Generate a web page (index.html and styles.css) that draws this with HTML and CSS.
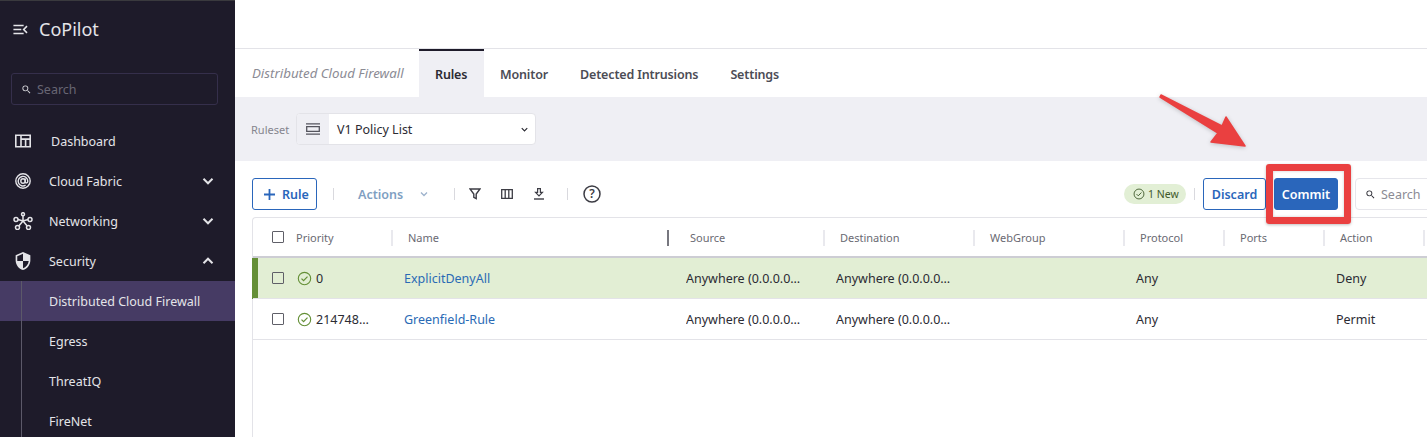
FILE: index.html
```html
<!DOCTYPE html>
<html lang="en">
<head>
  <meta charset="UTF-8" />
  <title>CoPilot</title>
  <link rel="stylesheet" href="styles.css">
</head>
<body>

<svg class="defs" width="0" height="0">
  <symbol id="chev" viewBox="0 0 24 24"><path d="M6 9l6 6 6-6" fill="none" stroke="currentColor" stroke-width="2.6"/></symbol>
  <symbol id="mag" viewBox="0 0 24 24"><path fill="currentColor" d="M15.5 14h-.79l-.28-.27A6.471 6.471 0 0 0 16 9.5 6.5 6.5 0 1 0 9.5 16c1.61 0 3.09-.59 4.23-1.57l.27.28v.79l5 4.99L20.49 19l-4.99-5zm-6 0C7.01 14 5 11.99 5 9.5S7.01 5 9.5 5 14 7.01 14 9.5 11.99 14 9.5 14z"/></symbol>
  <symbol id="ok" viewBox="0 0 16 16"><circle cx="8" cy="8" r="6.6" fill="none" stroke="currentColor" stroke-width="1.2"/><path d="M4.8 8.2l2.2 2.2 4.2-4.4" fill="none" stroke="currentColor" stroke-width="1.3"/></symbol>
</svg>

<div class="app">
  <!-- Sidebar -->
  <aside class="sidebar">
    <div class="brand">
      <svg class="brand-icon" viewBox="3 5 18 14"><path fill="currentColor" d="M3 18h13v-2H3v2zm0-5h10v-2H3v2zm0-7v2h13V6H3zm18 9.59L17.42 12 21 8.41 19.59 7l-5 5 5 5L21 15.59z"/></svg>
      <span>CoPilot</span>
    </div>
    <div class="side-search">
      <svg class="icon-10"><use href="#mag"/></svg>
      <span>Search</span>
    </div>
    <nav class="nav">
      <a class="nav-item nav-dash">
        <svg class="nav-icon" viewBox="0 0 16 13"><path fill="none" stroke="currentColor" stroke-width="1.6" d="M.8.8h14.4v11.4H.8zM6 .8v11.4M6 4.6h9.2M10.6 4.6v7.6"/></svg>
        <span>Dashboard</span>
      </a>
      <a class="nav-item">
        <svg class="nav-icon" viewBox="0 0 16 16"><g fill="none" stroke="currentColor" stroke-width="1.4"><circle cx="8" cy="8" r="7.2"/><circle cx="8" cy="8" r="2.2"/><path d="M10.2 5.4v3.4c0 1.6 2.6 1.6 2.6-.6A4.8 4.8 0 1 0 10.6 12.2"/></g></svg>
        <span>Cloud Fabric</span>
        <svg class="nav-chev"><use href="#chev"/></svg>
      </a>
      <a class="nav-item">
        <svg class="nav-icon nav-icon-wide" viewBox="0 0 20 18"><g fill="none" stroke="currentColor" stroke-width="1.5"><circle cx="10" cy="2.2" r="1.5"/><circle cx="3" cy="7.5" r="2"/><circle cx="17" cy="7.5" r="2"/><circle cx="4.5" cy="15.5" r="2"/><circle cx="15.5" cy="15.5" r="2"/><path d="M10 3.7v5M5 7.5l5 1.5 5-1.5M5.8 14l4.2-5 4.2 5"/></g></svg>
        <span>Networking</span>
        <svg class="nav-chev"><use href="#chev"/></svg>
      </a>
      <a class="nav-item">
        <svg class="nav-icon nav-icon-tall" viewBox="3 1 18 22"><path fill="currentColor" d="M12 1L3 5v6c0 5.55 3.84 10.74 9 12 5.16-1.26 9-6.45 9-12V5l-9-4zm0 10.99h7c-.53 4.12-3.28 7.79-7 8.94V12H5V6.3l7-3.11v8.8z"/></svg>
        <span>Security</span>
        <svg class="nav-chev nav-chev-up"><use href="#chev"/></svg>
      </a>
      <div class="subnav">
        <a class="nav-item selected"><span>Distributed Cloud Firewall</span></a>
        <a class="nav-item"><span>Egress</span></a>
        <a class="nav-item"><span>ThreatIQ</span></a>
        <a class="nav-item"><span>FireNet</span></a>
      </div>
    </nav>
  </aside>

  <!-- Main -->
  <main class="main">
    <div class="topbar"></div>

    <div class="tabs">
      <span class="page-title">Distributed Cloud Firewall</span>
      <a class="tab active">Rules</a>
      <a class="tab">Monitor</a>
      <a class="tab">Detected Intrusions</a>
      <a class="tab">Settings</a>
    </div>

    <div class="ruleset-bar">
      <span class="ruleset-label">Ruleset</span>
      <div class="ruleset-select">
        <span class="ruleset-addon">
          <svg width="14" height="12" viewBox="0 0 14 12"><path fill="none" stroke="#55555e" stroke-width="1.3" d="M.7 3.6h12.6v4.8H.7z"/><path stroke="#55555e" stroke-width="1.4" d="M0 .9h14M0 11.1h14"/></svg>
        </span>
        <span class="ruleset-value">V1 Policy List</span>
        <svg class="ruleset-chev"><use href="#chev"/></svg>
      </div>
    </div>

    <div class="content">
      <div class="toolbar">
        <button class="btn btn-outline btn-rule"><svg class="plus" viewBox="0 0 11 11"><path d="M5.5 0v11M0 5.500h11" stroke="currentColor" stroke-width="1.8"/></svg>Rule</button>
        <span class="tool-sep sep-a"></span>
        <span class="actions">Actions<svg class="actions-chev"><use href="#chev"/></svg></span>
        <span class="tool-sep sep-b"></span>
        <svg class="tool-icon" viewBox="0 0 12 12"><path fill="none" stroke="#3c3c44" stroke-width="1.4" d="M1 1h10L7.200 6v4.600l-2.400-1.200V6z"/></svg>
        <svg class="tool-icon" viewBox="0 0 12 10"><path fill="none" stroke="#3c3c44" stroke-width="1.3" d="M.7.7h10.600v8.600H.7zM4.200.7v8.600M7.800.7v8.600"/></svg>
        <svg class="tool-icon" viewBox="0 0 12 12"><path fill="none" stroke="#3c3c44" stroke-width="1.2" d="M4.600.6h2.800v3.800h2L6 7.800 2.600 4.400h2z"/><path stroke="#3c3c44" stroke-width="1.4" d="M1 11h10"/></svg>
        <span class="tool-sep sep-c"></span>
        <svg class="help-icon" viewBox="0 0 18 18"><circle cx="9" cy="9" r="8" fill="none" stroke="#3c3c44" stroke-width="1.5"/><text x="9" y="13" text-anchor="middle" class="help-q">?</text></svg>

        <div class="toolbar-right">
          <span class="badge-new"><svg class="icon-12"><use href="#ok"/></svg>1 New</span>
          <span class="tool-sep sep-d"></span>
          <button class="btn btn-outline btn-discard">Discard</button>
          <button class="btn btn-primary">Commit</button>
          <div class="table-search">
            <svg class="icon-10"><use href="#mag"/></svg>
            <span>Search</span>
          </div>
        </div>
      </div>

      <div class="table">
        <div class="row head">
          <div class="cell cell-first"><span class="check"></span><span>Priority</span></div>
          <div class="cell">Name<span class="col-handle"></span></div>
          <div class="cell">Source</div>
          <div class="cell">Destination</div>
          <div class="cell">WebGroup</div>
          <div class="cell">Protocol</div>
          <div class="cell">Ports</div>
          <div class="cell">Action</div>
          <div class="cell"></div>
        </div>
        <div class="row body-row is-new">
          <div class="cell cell-first"><span class="check"></span><svg class="row-ok"><use href="#ok"/></svg><span class="prio">0</span></div>
          <div class="cell"><a class="rule-link">ExplicitDenyAll</a></div>
          <div class="cell"><span class="clip">Anywhere (0.0.0.0/0)</span></div>
          <div class="cell"><span class="clip">Anywhere (0.0.0.0/0)</span></div>
          <div class="cell"></div>
          <div class="cell">Any</div>
          <div class="cell"></div>
          <div class="cell">Deny</div>
          <div class="cell"></div>
        </div>
        <div class="row body-row">
          <div class="cell cell-first"><span class="check"></span><svg class="row-ok"><use href="#ok"/></svg><span class="prio clip">2147483647</span></div>
          <div class="cell"><a class="rule-link">Greenfield-Rule</a></div>
          <div class="cell"><span class="clip">Anywhere (0.0.0.0/0)</span></div>
          <div class="cell"><span class="clip">Anywhere (0.0.0.0/0)</span></div>
          <div class="cell"></div>
          <div class="cell">Any</div>
          <div class="cell"></div>
          <div class="cell">Permit</div>
          <div class="cell"></div>
        </div>
      </div>
    </div>
  </main>
</div>

<!-- Annotation drawn on top of the screenshot -->
<svg class="note-arrow" width="100" height="66" viewBox="0 0 100 66"><path fill="#ea4040" stroke="#ea4040" stroke-width="1.5" stroke-linejoin="round" d="M3 5L4 3 65 34 69 25 88 54 54 50 61 41z"/></svg>
<div class="note-box"></div>

</body>
</html>
```

FILE: styles.css
```css
* {
  box-sizing: border-box;
}
html, body {
  height: 100%;
}
body {
  margin: 0;
  overflow: hidden;
  background-color: white;
  color: #2b2b33;
  font-family: "Noto Sans", "Liberation Sans", sans-serif;
  font-size: 12.5px;
}
.defs {
  display: none;
}
.app {
  display: flex;
  height: 437px;
  overflow: hidden;
}

/* sidebar */
.sidebar {
  flex: 0 0 235px;
  background-color: #1e1b2a;
  border-top: 1px solid #3a3a3e;
  color: #e4e4e8;
}
.brand {
  display: flex;
  align-items: center;
  height: 56px;
  padding-left: 13px;
  font-size: 18px;
  gap: 11px;
}
.brand-icon {
  width: 15px;
  height: 11px;
}
.side-search {
  display: flex;
  align-items: center;
  gap: 5px;
  height: 32px;
  margin: 16px 17px 0 11px;
  padding-left: 9px;
  border: 1px solid #352f4b;
  border-radius: 3px;
  color: #686674;
}
.side-search .icon-10 {
  color: #d8d8dc;
}
.icon-10 {
  width: 11px;
  height: 11px;
  flex: none;
}
.icon-12 {
  width: 12px;
  height: 12px;
  flex: none;
}
.nav {
  margin-top: 16px;
}
.nav-item {
  display: flex;
  align-items: center;
  height: 40px;
  padding-left: 49px;
  position: relative;
}
.nav-dash {
  padding-left: 51px;
}
.nav-icon {
  position: absolute;
  left: 15px;
  top: 12px;
  width: 16px;
  height: 16px;
}
.nav-icon-wide {
  left: 13px;
  width: 20px;
  height: 18px;
  top: 11px;
}
.nav-icon-tall {
  top: 11px;
  height: 18px;
}
.nav-chev {
  position: absolute;
  right: 18px;
  top: 11px;
  width: 18px;
  height: 18px;
}
.nav-chev-up {
  transform: rotate(180deg);
}
.subnav {
  position: relative;
  padding-bottom: 40px;
}
.subnav::before {
  content: "";
  position: absolute;
  left: 21px;
  top: 0;
  bottom: 0;
  width: 1px;
  background-color: #5c5969;
  z-index: 1;
}
.selected {
  background-color: #463b64;
}

/* main column */
.main {
  flex: 1;
  min-width: 0;
  overflow: hidden;
}
.topbar {
  height: 49px;
  border-bottom: 1px solid #e3e3e8;
}
.tabs {
  display: flex;
  align-items: center;
  height: 48px;
  padding-left: 17px;
}
.page-title {
  width: 167px;
  color: #8b8b94;
  font-style: italic;
  font-size: 13.3px;
}
.tab {
  display: flex;
  align-items: center;
  height: 48px;
  padding: 0 16px;
  font-weight: 600;
  letter-spacing: -0.15px;
  color: #4c4c55;
  border-top: 2px solid transparent;
}
.tab.active {
  width: 65px;
  color: #2b2b33;
  background-color: #efeff4;
  border-top-color: #1e1b2a;
}
.ruleset-bar {
  display: flex;
  align-items: center;
  height: 64px;
  padding-left: 16px;
  background-color: #efeff4;
}
.ruleset-label {
  width: 45px;
  font-size: 11px;
  color: #85858e;
}
.ruleset-select {
  display: flex;
  align-items: center;
  width: 240px;
  height: 32px;
  background-color: white;
  border: 1px solid #e3e3e8;
  border-radius: 4px;
  position: relative;
  overflow: hidden;
}
.ruleset-addon {
  display: flex;
  align-items: center;
  justify-content: center;
  width: 32px;
  height: 100%;
  background-color: #efeff4;
}
.ruleset-value {
  padding-left: 8px;
  color: #2b2b33;
}
.ruleset-chev {
  position: absolute;
  right: 5px;
  top: 10px;
  width: 11px;
  height: 11px;
}

/* toolbar */
.content {
  padding: 17px 0 0 17px;
  width: 1300px;
}
.toolbar {
  display: flex;
  align-items: center;
  width: 1223px;
  height: 32px;
}
.btn {
  height: 32px;
  border-radius: 3px;
  font-family: inherit;
  font-size: 12.5px;
  font-weight: 600;
  padding: 0;
}
.btn-outline {
  background-color: white;
  color: #2a66bb;
  border: 1px solid #2a66bb;
}
.btn-primary {
  width: 64px;
  margin-left: 8px;
  background-color: #2a66bb;
  color: white;
  border: 1px solid #2a66bb;
}
.btn-rule {
  display: flex;
  align-items: center;
  gap: 7px;
  padding-left: 11px;
  width: 65px;
}
.plus {
  width: 11px;
  height: 11px;
}
.btn-discard {
  width: 63px;
}
.tool-sep {
  width: 1px;
  height: 12px;
  background-color: #d9d9de;
  flex: none;
}
.sep-a {
  margin-left: 16px;
}
.actions {
  display: flex;
  align-items: center;
  margin-left: 24px;
  width: 96px;
  color: #7f9fc2;
  font-weight: 600;
}
.actions-chev {
  width: 12px;
  height: 12px;
  margin-left: 15px;
  color: #9db2cc;
}
.tool-icon {
  width: 12px;
  height: 12px;
  margin-left: 20px;
  flex: none;
}
.sep-b + .tool-icon {
  margin-left: 14px;
}
.sep-c {
  margin-left: 22px;
}
.help-icon {
  width: 18px;
  height: 18px;
  margin-left: 15px;
}
.help-q {
  font-size: 12px;
  font-weight: 600;
  fill: #3c3c44;
}
.toolbar-right {
  display: flex;
  align-items: center;
  margin-left: auto;
  flex: none;
}
.badge-new {
  display: flex;
  align-items: center;
  gap: 3px;
  flex: none;
  width: 62px;
  height: 20px;
  padding-left: 9px;
  border-radius: 10px;
  background-color: #e2efd5;
  color: #3f5a2c;
  font-size: 10.5px;
}
.sep-d {
  margin: 0 8px;
}
.table-search {
  display: flex;
  align-items: center;
  gap: 5px;
  flex: none;
  width: 120px;
  height: 32px;
  margin-left: 17px;
  padding-left: 9px;
  border: 1px solid #e6e6eb;
  border-radius: 4px;
  color: #8b8b94;
}
.table-search .icon-10 {
  color: #2b2b33;
}

/* table */
.table {
  width: 1300px;
  height: 260px;
  margin-top: 7px;
  border-top: 1px solid #e3e3e8;
  border-left: 1px solid #e3e3e8;
  border-top-left-radius: 4px;
}
.row {
  display: grid;
  grid-template-columns: 139px 282px 150px 150px 150px 100px 100px 100px 1fr;
}
.head {
  height: 40px;
  border-bottom: 2px solid #cdcdd4;
  color: #6a6a73;
  font-size: 11px;
}
.head .cell {
  position: relative;
  display: flex;
  align-items: center;
  padding-left: 16px;
}
.head .cell + .cell::before {
  content: "";
  position: absolute;
  left: -1px;
  top: 12px;
  width: 2px;
  height: 16px;
  background-color: #e9e9ee;
}
.head .cell:nth-child(3)::before {
  display: none;
}
.col-handle {
  position: absolute;
  right: 5px;
  top: 12px;
  width: 2px;
  height: 16px;
  background-color: #77777f;
}
.body-row {
  height: 41px;
  border-bottom: 1px solid #e3e3e8;
}
.body-row .cell {
  display: flex;
  align-items: center;
  padding-left: 12px;
  min-width: 0;
}
.head .cell-first,
.body-row .cell-first {
  padding-left: 19px;
}
.cell-first .check {
  margin-right: 12px;
}
.is-new {
  background-color: #e2eed4;
  box-shadow: inset 5px 0 0 #648f36, -1px 0 0 #648f36;
}
.check {
  width: 12px;
  height: 12px;
  flex: none;
  border: 1.5px solid #5f5f68;
  border-radius: 1px;
}
.row-ok {
  width: 15px;
  height: 15px;
  flex: none;
  color: #648f36;
  margin-left: 1px;
  margin-right: 4px;
}
.prio {
  width: 56px;
}
.clip {
  display: block;
  width: 117px;
  overflow: hidden;
  white-space: nowrap;
  text-overflow: ellipsis;
}
.prio.clip {
  width: 56px;
}
.rule-link {
  color: #2a6ab5;
}

/* red annotation */
.note-arrow {
  position: absolute;
  left: 1157px;
  top: 92px;
  filter: drop-shadow(0 1px 2px rgba(0, 0, 0, 0.2));
}
.note-box {
  position: absolute;
  left: 1266px;
  top: 164px;
  width: 85px;
  height: 60px;
  border: 7px solid #ea4040;
  border-radius: 3px;
  box-shadow: 0 1px 3px rgba(0, 0, 0, 0.25), inset 0 0 3px rgba(0, 0, 0, 0.2);
}
```
